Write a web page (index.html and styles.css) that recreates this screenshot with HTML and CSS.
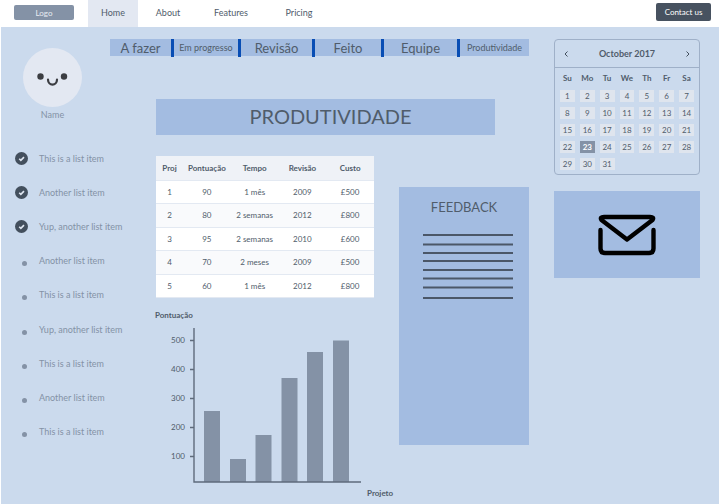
FILE: index.html
```html
<!DOCTYPE html>
<html lang="pt">
<head>
<meta charset="utf-8">
<title>Produtividade</title>
<link rel="stylesheet" href="styles.css">
</head>
<body>
<header class="topbar">
  <button class="logo" type="button">Logo</button>
  <nav class="nav">
    <a class="active" href="#">Home</a>
    <a href="#">About</a>
    <a href="#">Features</a>
    <a href="#">Pricing</a>
  </nav>
  <button class="contact" type="button">Contact us</button>
</header>
<div class="page">
  <aside class="sidebar">
    <svg class="avatar" viewBox="0 0 59 59" aria-hidden="true">
      <circle cx="29.500" cy="29.500" r="29.500" fill="#e3e8f2"/>
      <circle cx="17.500" cy="28.500" r="3.200" fill="#3b3d42"/>
      <circle cx="41" cy="28.500" r="3.200" fill="#3b3d42"/>
      <path d="M25 31.500c0 6.800 9 6.800 9 0" fill="none" stroke="#3b3d42" stroke-width="2.200" stroke-linecap="round"/>
    </svg>
    <p class="name">Name</p>
    <ul class="list">
      <li><svg class="check" viewBox="0 0 12 12"><circle cx="6" cy="6" r="6"/><path d="M3.900 6.200l1.500 1.500 2.900-3"/></svg>This is a list item</li>
      <li><svg class="check" viewBox="0 0 12 12"><circle cx="6" cy="6" r="6"/><path d="M3.900 6.200l1.500 1.500 2.900-3"/></svg>Another list item</li>
      <li><svg class="check" viewBox="0 0 12 12"><circle cx="6" cy="6" r="6"/><path d="M3.900 6.200l1.500 1.500 2.900-3"/></svg>Yup, another list item</li>
      <li><span class="dot"></span>Another list item</li>
      <li><span class="dot"></span>This is a list item</li>
      <li><span class="dot"></span>Yup, another list item</li>
      <li><span class="dot"></span>This is a list item</li>
      <li><span class="dot"></span>Another list item</li>
      <li><span class="dot"></span>This is a list item</li>
    </ul>
  </aside>
  <main class="center">
    <nav class="tabs">
      <a href="#">A fazer</a>
      <a class="small" href="#">Em progresso</a>
      <a href="#">Revisão</a>
      <a href="#">Feito</a>
      <a href="#">Equipe</a>
      <a class="small" href="#">Produtividade</a>
    </nav>
    <h1 class="title">PRODUTIVIDADE</h1>
    <div class="content">
      <div class="data">
        <table class="projects">
          <colgroup><col class="c-proj"><col><col><col><col></colgroup>
          <thead><tr><th>Proj</th><th>Pontuação</th><th>Tempo</th><th>Revisão</th><th>Custo</th></tr></thead>
          <tbody>
            <tr><td>1</td><td>90</td><td>1 mês</td><td>2009</td><td>£500</td></tr>
            <tr><td>2</td><td>80</td><td>2 semanas</td><td>2012</td><td>£800</td></tr>
            <tr><td>3</td><td>95</td><td>2 semanas</td><td>2010</td><td>£600</td></tr>
            <tr><td>4</td><td>70</td><td>2 meses</td><td>2009</td><td>£500</td></tr>
            <tr><td>5</td><td>60</td><td>1 mês</td><td>2012</td><td>£800</td></tr>
          </tbody>
        </table>
        <svg class="chart" viewBox="0 0 243 195" role="img" aria-label="Pontuação por projeto">
          <text class="axis-name" x="-1" y="20">Pontuação</text>
          <g class="scale" text-anchor="end">
            <text x="29" y="45">500</text>
            <text x="29" y="74">400</text>
            <text x="29" y="103">300</text>
            <text x="29" y="132">200</text>
            <text x="29" y="161">100</text>
          </g>
          <g class="bars">
            <rect x="48" y="113" width="16" height="71"/>
            <rect x="74" y="161" width="16" height="23"/>
            <rect x="99.500" y="137" width="16" height="47"/>
            <rect x="125.500" y="80" width="16" height="104"/>
            <rect x="151" y="54" width="16" height="130"/>
            <rect x="177" y="42.500" width="16" height="141.500"/>
          </g>
          <path class="axis" d="M38 30V184H205M34 42.500h4M34 71.500h4M34 100.500h4M34 129.500h4M34 158.500h4"/>
          <text class="axis-name" x="211" y="198">Projeto</text>
        </svg>
      </div>
      <section class="feedback">
        <h2>FEEDBACK</h2>
        <svg viewBox="0 0 90 66" aria-hidden="true">
          <path d="M0 2H90M0 11.500H90M0 20H90M0 28H90M0 37H90M0 45.500H90M0 54.500H90M0 65H90" stroke="#4b5768" stroke-width="2"/>
        </svg>
      </section>
    </div>
  </main>
  <aside class="right">
    <section class="calendar">
      <div class="month">
        <button type="button" aria-label="Previous month"><svg viewBox="0 0 6 8"><path d="M4.500 1.500L2 4l2.500 2.500"/></svg></button>
        <span>October 2017</span>
        <button type="button" aria-label="Next month"><svg viewBox="0 0 6 8"><path d="M1.500 1.500L4 4 1.500 6.500"/></svg></button>
      </div>
      <table>
        <thead><tr><th>Su</th><th>Mo</th><th>Tu</th><th>We</th><th>Th</th><th>Fr</th><th>Sa</th></tr></thead>
        <tbody>
          <tr><td>1</td><td>2</td><td>3</td><td>4</td><td>5</td><td>6</td><td>7</td></tr>
          <tr><td>8</td><td>9</td><td>10</td><td>11</td><td>12</td><td>13</td><td>14</td></tr>
          <tr><td>15</td><td>16</td><td>17</td><td>18</td><td>19</td><td>20</td><td>21</td></tr>
          <tr><td>22</td><td class="today">23</td><td>24</td><td>25</td><td>26</td><td>27</td><td>28</td></tr>
          <tr><td>29</td><td>30</td><td>31</td></tr>
        </tbody>
      </table>
    </section>
    <a class="mail" href="#" aria-label="Mail">
      <svg viewBox="0 0 58 42" aria-hidden="true">
        <path d="M6 3H52Q56.500 3 54.500 6L29 25.500 3.500 6Q1.500 3 6 3ZM2.500 16V34.500Q2.500 39 7 39H51Q55.500 39 55.500 34.500V16" fill="none" stroke="#000" stroke-width="4.400" stroke-linecap="round" stroke-linejoin="round"/>
      </svg>
    </a>
  </aside>
</div>
</body>
</html>
```
FILE: styles.css
```css
* { box-sizing: border-box; }
body {
  margin: 0;
  padding-left: 1px;
  min-height: 100vh;
  display: flex;
  flex-direction: column;
  background: #fff;
  color: #505c6b;
  font-family: Lato, sans-serif;
  font-size: 9px;
}
a { color: inherit; text-decoration: none; }
button { font: inherit; border: 0; padding: 0; background: none; color: inherit; }
h1, h2, p, ul { margin: 0; padding: 0; font-weight: 400; }
svg { display: block; }

.topbar { display: flex; height: 27px; padding: 0 8px 0 13px; }
.logo {
  width: 60px;
  height: 15px;
  margin: 5px 14px 0 0;
  border-radius: 2px;
  background: #8492a6;
  color: #e8ecf3;
  font-size: 8px;
}
.nav { display: grid; grid-template-columns: 50px 60px 66px 70px; }
.nav a { line-height: 25px; text-align: center; }
.nav .active { background: #e3e8f2; }
.contact {
  width: 55px;
  height: 18px;
  margin: 3px 0 0 auto;
  border-radius: 2px;
  background: #475260;
  color: #fff;
  font-size: 8px;
}

.page {
  flex: 1;
  display: grid;
  grid-template-columns: 109px 1fr 146px;
  padding: 12px 19px 0 0;
  background: #cbdaed;
}

.sidebar { color: #8492a6; }
.avatar { width: 59px; height: 59px; margin: 9px 0 0 22px; }
.name { width: 59px; margin-left: 22px; line-height: 15px; text-align: center; }
.list {
  height: 308px;
  margin-top: 19px;
  display: grid;
  grid-auto-rows: 1fr;
  list-style: none;
}
.list li {
  display: grid;
  grid-template-columns: 24px 1fr;
  align-items: center;
  padding-left: 14px;
  white-space: nowrap;
}
.check { width: 13px; height: 13px; }
.check circle { fill: #434f5d; }
.check path { fill: none; stroke: #dfe6f0; stroke-width: 1.5; }
.dot { width: 5px; height: 5px; margin: 6px 0 0 7px; border-radius: 50%; background: #8492a6; }

.center { padding-right: 25px; }
.tabs {
  display: grid;
  grid-template-columns: 64fr 67fr 74fr 69fr 76fr 69fr;
  height: 17px;
  background: #a3bce1;
}
.tabs a {
  border-right: 3px solid #084db4;
  font-size: 13px;
  line-height: 18px;
  text-align: center;
  white-space: nowrap;
}
.tabs .small { font-size: 9px; }
.tabs a:last-child { border-right: 0; }
.title {
  height: 36px;
  margin: 43px 34px 21px 46px;
  padding-left: 10px;
  background: #a3bce1;
  font-size: 20px;
  line-height: 34px;
  text-align: center;
}
.content { display: grid; grid-template-columns: 1fr 130px; margin-left: 46px; }
.projects {
  width: 218px;
  height: 142px;
  table-layout: fixed;
  border-collapse: collapse;
  background: #fff;
  font-size: 8px;
  text-align: center;
}
.c-proj { width: 27px; }
.projects th, .projects td { padding: 0; border-bottom: 1px solid #e3e9f2; white-space: nowrap; }
.projects th { height: 24px; background: #eff2f7; }
.projects tr:nth-child(even) td { background: #f9fafc; }
.chart { width: 243px; height: 195px; overflow: visible; }
.chart text { fill: #505c6b; font-size: 8px; }
.chart .axis-name { font-weight: 700; }
.bars { fill: #8492a6; }
.axis { fill: none; stroke: #5f6b7c; stroke-width: 1.4; }
.feedback { height: 258px; margin-top: 31px; background: #a3bce1; text-align: center; }
.feedback h2 { padding-top: 11px; font-size: 13px; line-height: 18px; }
.feedback svg { width: 90px; height: 66px; margin: 17px 0 0 24px; }

.calendar { border: 1px solid #9fb0c8; border-radius: 4px; }
.month {
  display: flex;
  align-items: center;
  justify-content: space-between;
  height: 28px;
  padding: 0 8px;
  border-bottom: 1px solid #9fb0c8;
  font-size: 9px;
  font-weight: 700;
}
.month svg { width: 6px; height: 8px; }
.month path { fill: none; stroke: #434f5d; }
.calendar table {
  width: 100%;
  table-layout: fixed;
  border-spacing: 5px;
  margin-bottom: -1px;
  font-size: 8px;
  line-height: 12px;
  text-align: center;
}
.calendar th, .calendar td { padding: 0; height: 12px; }
.calendar th { line-height: 10px; vertical-align: top; }
.calendar td { background: #dfe5ee; }
.calendar .today { background: #8492a6; color: #fff; font-weight: 700; }
.mail {
  display: grid;
  place-items: center;
  height: 87px;
  margin-top: 16px;
  background: #a3bce1;
}
.mail svg { width: 58px; height: 42px; }
```
